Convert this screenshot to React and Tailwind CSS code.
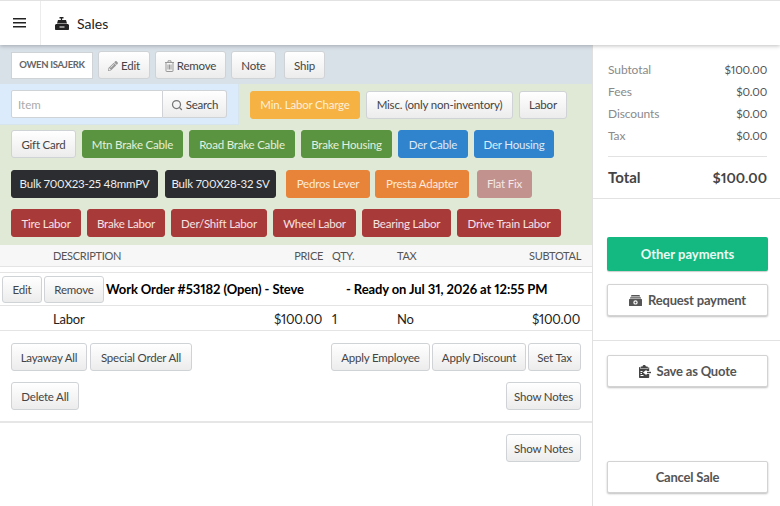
import { FaPencilAlt } from "react-icons/fa";
import { FiSearch } from "react-icons/fi";

const base =
  "inline-flex items-center justify-center h-[28px] rounded-[3px] border pt-[1px] text-[11.5px] tracking-[-0.2px] font-normal leading-none whitespace-nowrap";
const light = `${base} border-[#d0d3d6] bg-gradient-to-b from-white to-[#ececec] text-[#444]`;

const colors = {
  yellow: "bg-[#f6b243] border-[#f6b243] text-[#fdf0d8]",
  green: "bg-[#5a9440] border-[#5a9440] text-[#e4f0dc]",
  blue: "bg-[#3083cd] border-[#3083cd] text-[#dcebf8]",
  black: "bg-[#2b2d30] border-[#2b2d30] text-[#eeeeee]",
  orange: "bg-[#e8833a] border-[#e8833a] text-[#fdeadb]",
  rose: "bg-[#c2928f] border-[#c2928f] text-[#f5e8e7]",
  red: "bg-[#a93a3a] border-[#a93a3a] text-[#f6e2e2]",
};

const rows = [
  {
    gap: "gap-[6px]",
    items: [
      ["Gift Card", null, "w-[65px]"],
      ["Mtn Brake Cable", "green", "w-[101px]"],
      ["Road Brake Cable", "green", "w-[106px]"],
      ["Brake Housing", "green", "w-[91px]"],
      ["Der Cable", "blue", "w-[70px]"],
      ["Der Housing", "blue", "w-[80px]"],
    ],
  },
  {
    gap: "gap-[7px]",
    items: [
      ["Bulk 700X23-25 48mmPV", "black", "w-[147px]"],
      ["Bulk 700X28-32 SV", "black", "w-[111px]"],
      ["Pedros Lever", "orange", "w-[84px] ml-[3px]"],
      ["Presta Adapter", "orange", "w-[94px] -ml-[2px]"],
      ["Flat Fix", "rose", "w-[55px] ml-[1px]"],
    ],
  },
  {
    gap: "gap-[6px]",
    items: [
      ["Tire Labor", "red", "w-[70px]"],
      ["Brake Labor", "red", "w-[78px]"],
      ["Der/Shift Labor", "red", "w-[96px]"],
      ["Wheel Labor", "red", "w-[83px]"],
      ["Bearing Labor", "red", "w-[89px]"],
      ["Drive Train Labor", "red", "w-[104px]"],
    ],
  },
];

function QuickButton({ label, color, width }) {
  return (
    <button className={`${color ? `${base} ${colors[color]}` : light} ${width}`}>
      {label}
    </button>
  );
}

function RegisterIcon() {
  return (
    <svg width="14" height="13" viewBox="0 0 14 13" fill="#222">
      <path d="M4.500 0h4v1.500h-1.400V3h-1.200V1.500H4.500z" />
      <path d="M3 3h8l1 3.500H2z" />
      <path
        fillRule="evenodd"
        d="M1 7h12l1 1v4.200c0 .4-.3.8-.8.8H.8c-.5 0-.8-.4-.8-.8V8zM4.500 9.500v1h5v-1z"
      />
    </svg>
  );
}

function TrashIcon() {
  return (
    <svg width="9" height="12" viewBox="0 0 9 12" fill="none" stroke="#999" strokeWidth="1">
      <path d="M0 2.500h9M3 2.500V.8h3v1.700" />
      <path d="M1 2.500v8.500c0 .3.200.5.500.5h6c.3 0 .5-.2.500-.5V2.500" />
      <path d="M3 4.500v5M4.500 4.500v5M6 4.500v5" />
    </svg>
  );
}

function MoneyIcon() {
  return (
    <svg width="13" height="11" viewBox="0 0 13 11" fill="#555">
      <path d="M2.500 0h8l.7 1.600H1.800zM1.400 2.200h10.200l.6 1.200H.8z" />
      <path
        fillRule="evenodd"
        d="M.6 4h11.800c.3 0 .6.300.6.600v5.800c0 .3-.3.600-.6.600H.6c-.3 0-.6-.3-.6-.6V4.600C0 4.300.3 4 .6 4zM6.500 5.200a2.200 2.200 0 1 0 0 4.400 2.200 2.200 0 0 0 0-4.400z"
      />
      <circle cx="6.500" cy="7.400" r="1" />
    </svg>
  );
}

function QuoteIcon() {
  return (
    <svg width="12" height="13" viewBox="0 0 12 13" fill="#444">
      <path
        fillRule="evenodd"
        d="M3.500 1.500C3.500.7 4.200 0 5.200 0s1.700.7 1.700 1.500h1.300c.4 0 .7.300.7.700V3H1.500v-.8c0-.4.300-.7.700-.7zM.7 2H1v1.600h8.500V2h.1c.3 0 .6.300.6.700v3.300H7.500v-1.200L4 7.500l3.500 2.700V9h2.700v3.300c0 .4-.3.700-.7.700H.7c-.4 0-.7-.3-.7-.7V2.700C0 2.300.3 2 .7 2z"
      />
      <path d="M8 6.800h4v1.400H8z" />
      <path d="M1.500 6h2v1h-2zM1.500 8h1.500v1H1.500zM1.500 10h3v1h-3z" fill="#fff" />
    </svg>
  );
}

function SummaryRow({ label, value }) {
  return (
    <div className="flex justify-between h-[22px] items-center text-[12px] tracking-[-0.1px]">
      <span className="text-[#8a8a8a]">{label}</span>
      <span className="text-[11.500px] tracking-[-0.2px] text-[#555]">{value}</span>
    </div>
  );
}

function SideButton({ children }) {
  return (
    <button className="flex items-center justify-center gap-[6px] w-[161px] rounded-[2px] border border-[#d3d3d3] bg-white pt-[1px] text-[13px] tracking-[-0.2px] font-bold text-[#555] shadow-[0_1px_2px_rgba(0,0,0,0.25)] h-[32px]">
      {children}
    </button>
  );
}

export default function App() {
  return (
    <div
      className="w-[780px] h-[506px] overflow-hidden bg-white flex flex-col text-[#222] proportional-nums"
      style={{ fontFamily: "Lato, sans-serif" }}
    >
      <header className="relative z-10 flex h-[45px] shrink-0 border-t border-[#e2e2e2] bg-white shadow-[0_1px_4px_rgba(0,0,0,0.25)]">
        <div className="flex w-[41px] items-center justify-center border-r border-[#ececec] pr-[2px]">
          <svg width="13" height="10" viewBox="0 0 13 10" fill="#222">
            <rect y="0" width="13" height="1.500" />
            <rect y="4" width="13" height="1.500" />
            <rect y="8" width="13" height="1.500" />
          </svg>
        </div>
        <div className="flex items-center gap-[8px] pl-[14px] text-[14px] text-[#222]">
          <RegisterIcon />
          <span>Sales</span>
        </div>
      </header>

      <div className="flex flex-1 min-h-0">
        <main className="w-[593px] shrink-0 border-r border-[#e0e0e0] flex flex-col">
          <div className="flex h-[39px] shrink-0 items-center gap-[5px] bg-[#d8e0e8] pl-[11px] pt-[1px]">
            <button className="flex h-[27px] w-[82px] items-center justify-center border border-[#d0d3d6] bg-white text-[9.500px] tracking-[-0.3px] font-bold text-[#666]">
              OWEN ISAJERK
            </button>
            <button className={`${light} w-[52px] gap-[3px]`}>
              <FaPencilAlt className="text-[10px] text-[#999]" />
              Edit
            </button>
            <button className={`${light} w-[71px] gap-[3px]`}>
              <TrashIcon />
              Remove
            </button>
            <button className={`${light} w-[45px]`}>Note</button>
            <button className={`${light} w-[41px] ml-[3px]`}>Ship</button>
          </div>

          <div className="h-[161px] shrink-0 bg-[#dfe9d6]">
            <div className="flex h-[41px]">
              <div className="flex w-[239px] items-center border-r border-b border-[#d6e4ee] bg-[#dcebfb] pl-[11px]">
                <div className="flex h-[28px] w-[216px]">
                  <div className="flex w-[152px] items-center rounded-l-[2px] border border-[#cfd3d6] bg-white pl-[6px] pt-[1px] text-[11.500px] text-[#aaa]">
                    Item
                  </div>
                  <button className={`${light} w-[64px] gap-[3px] rounded-l-none border-l-0`}>
                    <FiSearch className="text-[12px] text-[#777]" strokeWidth={2.5} />
                    Search
                  </button>
                </div>
              </div>
              <div className="flex items-center gap-[6px] pl-[11px]">
                <QuickButton label="Min. Labor Charge" color="yellow" width="w-[110px]" />
                <QuickButton label="Misc. (only non-inventory)" width="w-[147px]" />
                <QuickButton label="Labor" width="w-[48px]" />
              </div>
            </div>
            <div className="flex flex-col gap-[11.500px] pl-[11px] pt-[5px]">
              {rows.map((row, i) => (
                <div key={i} className={`flex ${row.gap}`}>
                  {row.items.map(([label, color, width]) => (
                    <QuickButton key={label} label={label} color={color} width={width} />
                  ))}
                </div>
              ))}
            </div>
          </div>

          <div className="flex h-[22px] shrink-0 items-center border-b border-[#e4e4e4] bg-[#f7f7f7] pt-[1px] text-[11px] tracking-[-0.3px] text-[#555]">
            <span className="ml-[53px] w-[232px]">DESCRIPTION</span>
            <span className="w-[38px] text-right">PRICE</span>
            <span className="ml-[9px] w-[65px]">QTY.</span>
            <span className="w-[60px]">TAX</span>
            <span className="w-[124px] text-right">SUBTOTAL</span>
          </div>

          <div className="mt-[5px] flex h-[34px] shrink-0 items-center border-y border-[#e4e4e4] pl-[2px] text-[13px] font-bold tracking-[-0.1px] text-black">
            <button className={`${light} !h-[27px] w-[40px]`}>Edit</button>
            <button className={`${light} !h-[27px] ml-[2px] w-[60px]`}>Remove</button>
            <span className="ml-[2px] w-[240px] pt-[1px]">Work Order #53182 (Open) - Steve</span>
            <span className="pt-[1px]">- Ready on Jul 31, 2026 at 12:55 PM</span>
          </div>

          <div className="flex h-[25px] shrink-0 items-center border-b border-[#e4e4e4] pt-[3px] text-[13px] tracking-[-0.2px] text-[#222]">
            <span className="ml-[53px] w-[232px]">Labor</span>
            <span className="w-[37px] whitespace-nowrap flex justify-end">$100.00</span>
            <span className="ml-[10px] w-[65px]">1</span>
            <span className="w-[60px]">No</span>
            <span className="w-[123px] text-right">$100.00</span>
          </div>

          <div className="flex justify-between pl-[11px] pr-[11px] pt-[12px]">
            <div className="flex gap-[3px]">
              <button className={`${light} w-[76px]`}>Layaway All</button>
              <button className={`${light} w-[102px]`}>Special Order All</button>
            </div>
            <div className="flex gap-[2px]">
              <button className={`${light} w-[99px]`}>Apply Employee</button>
              <button className={`${light} w-[94px]`}>Apply Discount</button>
              <button className={`${light} w-[53px]`}>Set Tax</button>
            </div>
          </div>
          <div className="flex justify-between pl-[11px] pr-[11px] pt-[11px]">
            <button className={`${light} w-[68px]`}>Delete All</button>
            <button className={`${light} w-[75px]`}>Show Notes</button>
          </div>

          <div className="mt-[11px] border-t-2 border-[#e6e6e6] flex justify-end pr-[11px] pt-[11px]">
            <button className={`${light} w-[75px]`}>Show Notes</button>
          </div>
        </main>

        <aside className="flex flex-1 flex-col min-w-0">
          <div className="ml-[15px] mr-[13px] mt-[14px] pb-[9px] border-b border-[#e2e2e2]">
            <SummaryRow label="Subtotal" value="$100.00" />
            <SummaryRow label="Fees" value="$0.00" />
            <SummaryRow label="Discounts" value="$0.00" />
            <SummaryRow label="Tax" value="$0.00" />
          </div>
          <div className="flex h-[42px] items-center justify-between border-b border-[#e2e2e2] pl-[15px] pr-[13px] text-[15px] font-bold text-[#444]">
            <span>Total</span>
            <span className="text-[14px]">$100.00</span>
          </div>
          <div className="flex flex-col items-center border-b border-[#e2e2e2] h-[142px] pl-[2px] pt-[38px]">
            <button className="h-[34px] w-[161px] rounded-[2px] bg-[#13b981] pt-[1px] text-[13px] font-bold text-[#eafaf3] shadow-[0_1px_1px_rgba(0,0,0,0.2)]">
              Other payments
            </button>
            <div className="mt-[13px]">
              <SideButton>
                <MoneyIcon />
                Request payment
              </SideButton>
            </div>
          </div>
          <div className="flex flex-1 flex-col items-center justify-between pl-[2px] pt-[14px] pb-[13px]">
            <SideButton>
              <QuoteIcon />
              Save as Quote
            </SideButton>
            <SideButton>Cancel Sale</SideButton>
          </div>
        </aside>
      </div>
    </div>
  );
}
